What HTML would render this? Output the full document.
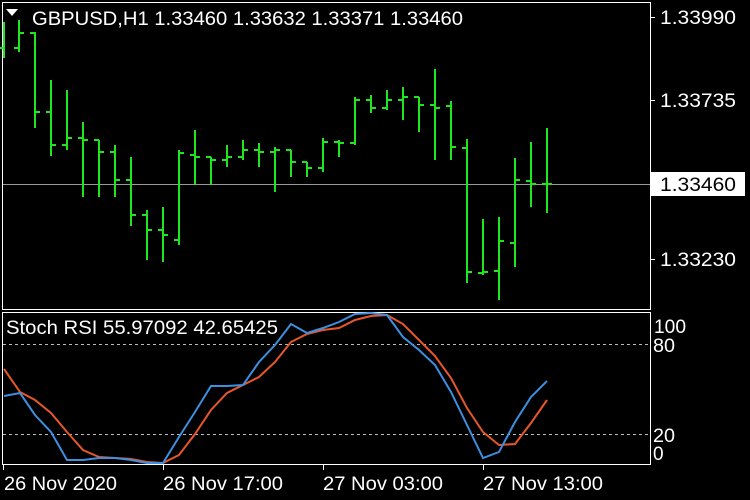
<!DOCTYPE html>
<html><head><meta charset="utf-8"><style>
html,body{margin:0;padding:0;background:#000;width:750px;height:500px;overflow:hidden}
svg{display:block}
text{font-family:"Liberation Sans",sans-serif;fill:#fff}
</style></head><body>
<svg width="750" height="500" viewBox="0 0 750 500">
<rect width="750" height="500" fill="#000"/>
<rect x="2.5" y="2.5" width="648" height="307" fill="none" stroke="#fff" stroke-width="1"/>
<rect x="2.5" y="312.5" width="648" height="152" fill="none" stroke="#fff" stroke-width="1"/>
<line x1="3" y1="184.5" x2="650" y2="184.5" stroke="#9a9a9a" stroke-width="1"/>
<line x1="3" y1="344.5" x2="650" y2="344.5" stroke="#bbb" stroke-dasharray="3,3"/>
<line x1="3" y1="434.5" x2="650" y2="434.5" stroke="#bbb" stroke-dasharray="3,3"/>
<g stroke="#fff"><line x1="650" y1="17.5" x2="655" y2="17.5"/><line x1="650" y1="100.5" x2="655" y2="100.5"/><line x1="650" y1="259.5" x2="655" y2="259.5"/></g>
<text x="660" y="24" font-size="19" textLength="76" lengthAdjust="spacingAndGlyphs">1.33990</text>
<text x="660" y="107" font-size="19" textLength="76" lengthAdjust="spacingAndGlyphs">1.33735</text>
<text x="660" y="266" font-size="19" textLength="76" lengthAdjust="spacingAndGlyphs">1.33230</text>
<rect x="651" y="172" width="94" height="24" fill="#fff"/>
<text x="660" y="191" font-size="19" textLength="76" lengthAdjust="spacingAndGlyphs" style="fill:#000">1.33460</text>
<text x="654" y="333" font-size="19" textLength="32" lengthAdjust="spacingAndGlyphs">100</text>
<text x="653" y="352" font-size="19" textLength="22" lengthAdjust="spacingAndGlyphs">80</text>
<text x="653" y="442" font-size="19" textLength="22" lengthAdjust="spacingAndGlyphs">20</text>
<text x="653" y="460" font-size="19">0</text>
<polygon points="6,9 18,9 12,16" fill="#fff"/>
<text x="32" y="25" font-size="19" textLength="431" lengthAdjust="spacingAndGlyphs">GBPUSD,H1  1.33460 1.33632 1.33371 1.33460</text>
<text x="6" y="334" font-size="19" textLength="272" lengthAdjust="spacingAndGlyphs">Stoch RSI 55.97092 42.65425</text>
<path fill="none" stroke="#1ee61e" stroke-width="2" d="
M4 22V58 M4 48h-5 M4 48h0
M19 20V52 M19 48h-5 M19 33h5
M35 32V128 M35 33h-5 M35 112h5
M51 80V156 M51 112h-5 M51 145h5
M67 90V150 M67 145h-5 M67 138h5
M83 122V197 M83 138h-5 M83 140h5
M99 140V197 M99 140h-5 M99 152h5
M115 145V197 M115 152h-5 M115 180h5
M131 157V226 M131 180h-5 M131 215h5
M147 210V260 M147 215h-5 M147 230h5
M163 207V262 M163 230h-5 M163 235h5
M179 150V245 M179 240h-5 M179 153h5
M195 130V185 M195 155h-5 M195 157h5
M211 157V185 M211 157h-5 M211 160h5
M227 145V167 M227 160h-5 M227 157h5
M243 140V160 M243 157h-5 M243 150h5
M259 143V167 M259 150h-5 M259 152h5
M275 147V192 M275 152h-5 M275 150h5
M291 150V177 M291 150h-5 M291 162h5
M307 162V177 M307 162h-5 M307 168h5
M323 138V172 M323 168h-5 M323 142h5
M339 140V157 M339 142h-5 M339 143h5
M355 97V145 M355 143h-5 M355 100h5
M371 95V113 M371 100h-5 M371 108h5
M387 90V110 M387 108h-5 M387 100h5
M403 87V120 M403 100h-5 M403 97h5
M419 97V132 M419 97h-5 M419 105h5
M435 69V160 M435 105h-5 M435 108h5
M451 101V160 M451 106h-5 M451 147h5
M467 139V283 M467 148h-5 M467 272h5
M483 219V275 M483 273h-5 M483 272h5
M499 217V300 M499 271h-5 M499 241h5
M515 158V267 M515 243h-5 M515 180h5
M531 142V207 M531 181h-5 M531 184h5
M547 128V213 M547 184h-5 M547 184h5"/>
<polyline fill="none" stroke="#e8572a" stroke-width="2" points="4,369 20,392 35,400 51,413 67,432 83,450 99,457 115,458 131,459 147,462 163,463 179,455 195,434 211,410 227,393 243,385 259,377 275,362 291,342 307,334 323,330 339,328 355,320 371,316 387,315 403,324 419,340 435,356 451,378 467,408 483,432 499,445 515,444 531,423 547,400"/>
<polyline fill="none" stroke="#3d8fe0" stroke-width="2" points="4,396 20,393 35,415 51,432 67,460 83,460 99,458 115,458 131,460 147,463 163,463 179,437 195,412 211,386 227,386 243,385 259,362 275,345 291,324 307,333 323,328 339,322 355,314 371,313 387,315 403,337 419,350 435,365 451,392 467,425 483,458 499,452 515,422 531,397 547,381"/>
<g stroke="#fff"><line x1="3.5" y1="465" x2="3.5" y2="470"/><line x1="163.5" y1="465" x2="163.5" y2="470"/><line x1="323.5" y1="465" x2="323.5" y2="470"/><line x1="483.5" y1="465" x2="483.5" y2="470"/></g>
<text x="4" y="490" font-size="19" textLength="113" lengthAdjust="spacingAndGlyphs">26 Nov 2020</text>
<text x="163" y="490" font-size="19" textLength="120" lengthAdjust="spacingAndGlyphs">26 Nov 17:00</text>
<text x="323" y="490" font-size="19" textLength="120" lengthAdjust="spacingAndGlyphs">27 Nov 03:00</text>
<text x="483" y="490" font-size="19" textLength="120" lengthAdjust="spacingAndGlyphs">27 Nov 13:00</text>
</svg>
</body></html>
